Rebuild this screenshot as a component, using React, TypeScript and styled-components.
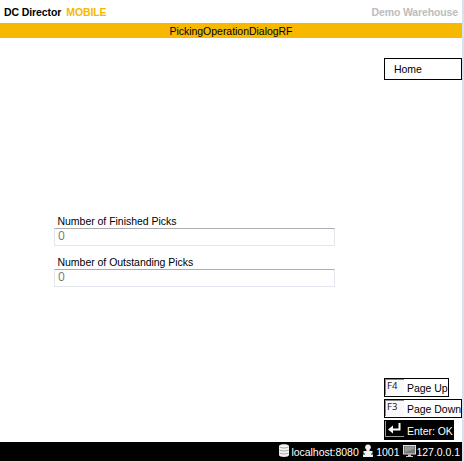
import React from 'react';
import styled, { createGlobalStyle } from 'styled-components';

const GlobalStyle = createGlobalStyle`
  * { box-sizing: border-box; }
  body { margin: 0; background: #fff; font-family: "Liberation Sans", Arial, sans-serif; }
`;

const Screen = styled.div`
  width: 464px;
  height: 462px;
  display: flex;
  flex-direction: column;
  border-right: 2px solid #d5e3f1;
  border-bottom: 1px solid #d5e3f1;
  background: #fff;
  font-size: 10px;
  color: #000;
  overflow: hidden;
`;

const Text = styled.span<{ $track?: number }>`
  font-size: 10.5px;
  letter-spacing: ${p => p.$track ?? -0.03}px;
  line-height: 13px;
  white-space: nowrap;
`;

const Header = styled.header`
  height: 23px;
  flex: none;
  display: flex;
  justify-content: space-between;
  padding: 6px 4px 0 4px;
  font-weight: bold;
`;

const Brand = styled.div`
  display: flex;
  gap: 5px;
`;

const Product = styled(Text)`
  color: #f7b800;
`;

const Warehouse = styled(Text)`
  color: #bdbdbd;
`;

const TitleBar = styled.div`
  height: 15px;
  flex: none;
  display: flex;
  justify-content: center;
  padding-top: 2px;
  background: #f7b800;
`;

const Body = styled.main`
  flex: 1;
  display: flex;
  justify-content: space-between;
`;

const Form = styled.form`
  width: 281px;
  margin-left: 54px;
  padding-top: 177px;
  display: flex;
  flex-direction: column;
`;

const Field = styled.label`
  height: 41px;
  display: flex;
  flex-direction: column;
`;

const FieldLabel = styled(Text)`
  height: 13px;
  padding-left: 3.5px;
`;

const Input = styled.input`
  width: 281px;
  height: 18px;
  border: 1px solid #e2e5ed;
  border-top-color: #abadb3;
  border-radius: 1px;
  padding: 0 3px 3px;
  font: 12px "Open Sans", sans-serif;
  color: #777;
  background: #fff;
  outline: none;
`;

const Side = styled.nav`
  width: 78px;
  display: flex;
  flex-direction: column;
  justify-content: space-between;
  padding: 20px 0 2px;
`;

const HomeButton = styled.button`
  width: 78px;
  height: 22px;
  display: flex;
  align-items: center;
  border: 1px solid #000;
  padding: 1px 0 0 9px;
  background: #fff;
  font-family: inherit;
  color: #000;
`;

const Keys = styled.div`
  display: flex;
  flex-direction: column;
  align-items: flex-start;
  gap: 2px;
`;

const KeyButton = styled.button<{ $width: number; $dark?: boolean }>`
  width: ${p => p.$width}px;
  height: ${p => (p.$dark ? 20 : 19)}px;
  display: flex;
  align-items: flex-start;
  gap: 3px;
  padding: 0;
  border: 1px solid #000;
  background: ${p => (p.$dark ? '#000' : '#fff')};
  color: ${p => (p.$dark ? '#fff' : '#000')};
  font-family: inherit;
`;

const KeyCap = styled.span`
  width: 19px;
  height: 16px;
  flex: none;
  padding-left: 1px;
  border: 1px solid #888;
  border-width: 1px 0 0 1px;
  background: #f9f9f9;
  font: 9.5px/12px "Noto Sans", sans-serif;
  color: #222;
  text-align: left;
`;

const DarkCap = styled(KeyCap)`
  border-color: #999;
  border-width: 0 0 1px 1px;
  background: #000;
  padding: 0;
`;

const KeyLabel = styled(Text)<{ $drop?: number }>`
  padding-top: ${p => p.$drop ?? 3}px;
`;

const Footer = styled.footer`
  height: 19px;
  flex: none;
  display: flex;
  justify-content: flex-end;
  background: #000;
  color: #fff;
  padding-right: 2px;
`;

const Status = styled.div<{ $gap: number; $after?: number }>`
  display: flex;
  gap: ${p => p.$gap}px;
  margin-right: ${p => p.$after ?? 0}px;
  svg { flex: none; display: block; margin-top: 2px; }
`;

const StatusText = styled(Text)`
  padding-top: 4px;
`;

const EnterIcon = () => (
  <svg width="18" height="15" viewBox="0 0 18 15" display="block">
    <path d="M13.5 2V8.5H5" fill="none" stroke="#fff" strokeWidth="2" />
    <path d="M2 8.5L7 4.5V12.5Z" fill="#fff" />
  </svg>
);

const DatabaseIcon = () => (
  <svg width="10" height="14" viewBox="0 0 10 14">
    <path d="M0 2C0 -.3 10 -.3 10 2V11C10 13.6 0 13.6 0 11Z" fill="#f2f2f2" />
    <path d="M.5 3.2Q5 5 9.5 3.2M.5 6.2Q5 8 9.5 6.2M.5 9.2Q5 11 9.5 9.2" fill="none" stroke="#999" strokeWidth=".8" />
  </svg>
);

const UserIcon = () => (
  <svg width="10" height="14" viewBox="0 0 10 14">
    <circle cx="5" cy="3.3" r="2.8" fill="#f2f2f2" />
    <path d="M3.5 5.5H6.5V7H9.5V9.5H8V10.5H10V13H0V10.5H2V9.5H.5V7H3.5Z" fill="#f2f2f2" />
  </svg>
);

const MonitorIcon = () => (
  <svg width="13" height="14" viewBox="0 0 13 14">
    <rect x=".5" y="1.5" width="12" height="8.5" fill="#777" stroke="#ddd" />
    <path d="M2 2.5H11V5L2 8Z" fill="#999" />
    <path d="M5 10.5H8V12H10V13H3V12H5Z" fill="#ccc" />
  </svg>
);

export default function App() {
  return (
    <>
      <GlobalStyle />
      <Screen>
        <Header>
          <Brand>
            <Text $track={-0.1}>DC Director</Text>
            <Product $track={-0.1}>MOBILE</Product>
          </Brand>
          <Warehouse $track={-0.13}>Demo Warehouse</Warehouse>
        </Header>
        <TitleBar><Text $track={-0.03}>PickingOperationDialogRF</Text></TitleBar>
        <Body>
          <Form>
            <Field>
              <FieldLabel>Number of Finished Picks</FieldLabel>
              <Input defaultValue="0" />
            </Field>
            <Field>
              <FieldLabel>Number of Outstanding Picks</FieldLabel>
              <Input defaultValue="0" />
            </Field>
          </Form>
          <Side>
            <HomeButton><Text>Home</Text></HomeButton>
            <Keys>
              <KeyButton $width={65}><KeyCap>F4</KeyCap><KeyLabel>Page Up</KeyLabel></KeyButton>
              <KeyButton $width={78}><KeyCap>F3</KeyCap><KeyLabel>Page Down</KeyLabel></KeyButton>
              <KeyButton $width={70} $dark><DarkCap><EnterIcon /></DarkCap><KeyLabel $drop={4}>Enter: OK</KeyLabel></KeyButton>
            </Keys>
          </Side>
        </Body>
        <Footer>
          <Status $gap={2} $after={4}><DatabaseIcon /><StatusText>localhost:8080</StatusText></Status>
          <Status $gap={3.5} $after={3.5}><UserIcon /><StatusText>1001</StatusText></Status>
          <Status $gap={0.5}><MonitorIcon /><StatusText>127.0.0.1</StatusText></Status>
        </Footer>
      </Screen>
    </>
  );
}
